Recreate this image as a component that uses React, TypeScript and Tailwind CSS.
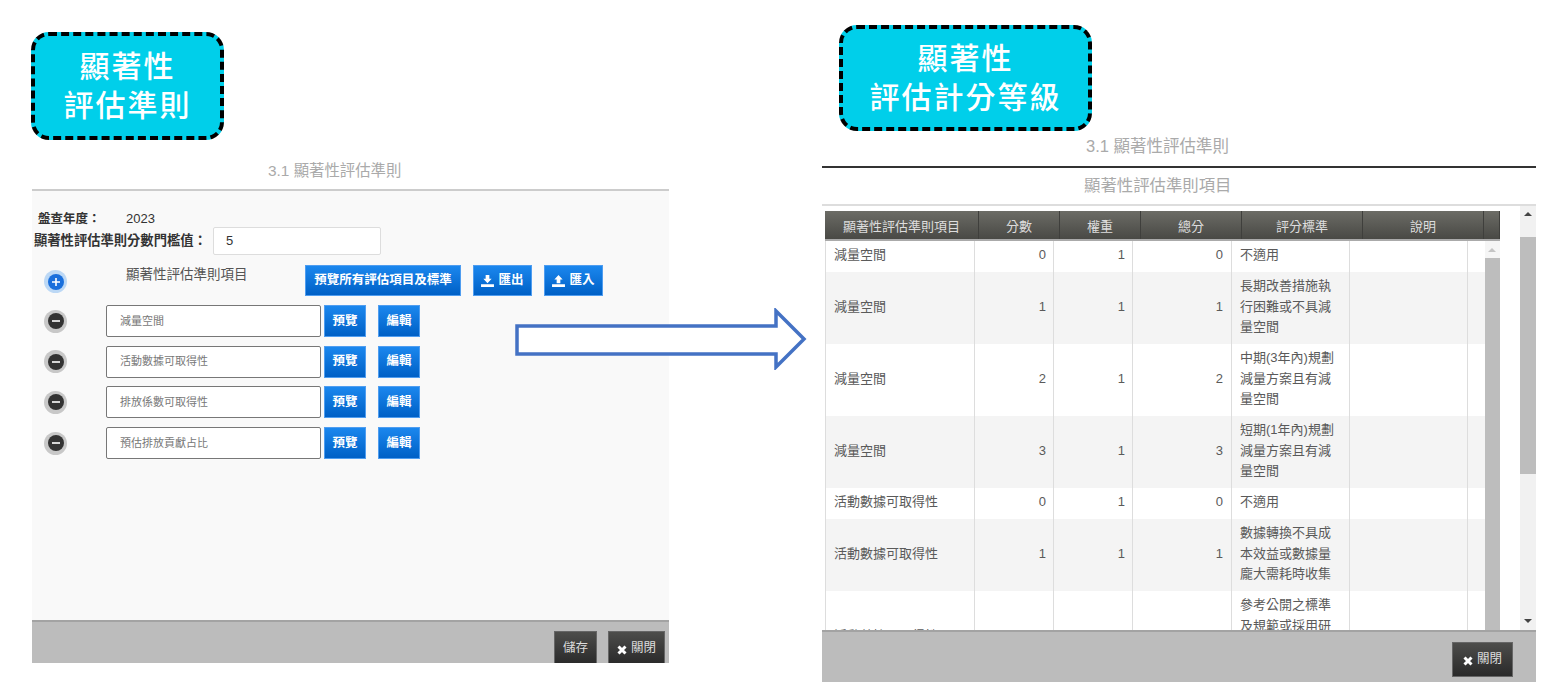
const font = "font-['Liberation_Sans','Noto_Sans_CJK_TC',sans-serif]";

const criteria = ["減量空間", "活動數據可取得性", "排放係數可取得性", "預估排放貢獻占比"];

const headers = [
  { label: "顯著性評估準則項目", width: "w-[154px]" },
  { label: "分數", width: "w-[81px]" },
  { label: "權重", width: "w-[81px]" },
  { label: "總分", width: "w-[101px]" },
  { label: "評分標準", width: "w-[121px]" },
  { label: "說明", width: "w-[121px]" },
  { label: "", width: "w-[16px]" },
];

const rows = [
  { item: "減量空間", score: 0, total: 0, rule: "不適用", height: "h-[31px]" },
  { item: "減量空間", score: 1, total: 1, rule: "長期改善措施執\n行困難或不具減\n量空間", height: "h-[72px]" },
  { item: "減量空間", score: 2, total: 2, rule: "中期(3年內)規劃\n減量方案且有減\n量空間", height: "h-[72px]" },
  { item: "減量空間", score: 3, total: 3, rule: "短期(1年內)規劃\n減量方案且有減\n量空間", height: "h-[72px]" },
  { item: "活動數據可取得性", score: 0, total: 0, rule: "不適用", height: "h-[31px]" },
  { item: "活動數據可取得性", score: 1, total: 1, rule: "數據轉換不具成\n本效益或數據量\n龐大需耗時收集", height: "h-[72px]" },
  { item: "活動數據可取得性", score: 2, total: 2, rule: "參考公開之標準\n及規範或採用研\n究報告數據推\n估", height: "h-[93px]" },
];

function Badge({ lines, className }: { lines: string[]; className: string }) {
  return (
    <div
      className={`flex flex-col items-center justify-center rounded-[18px] border-[4px] border-dashed border-black bg-[#00cfea] text-[30px] leading-[39px] font-medium tracking-[2px] text-white ${className}`}
    >
      {lines.map((line) => (
        <div key={line}>{line}</div>
      ))}
    </div>
  );
}

function BlueButton({ children, className }: { children: React.ReactNode; className: string }) {
  return (
    <button className={`flex items-center justify-center gap-1 border border-[#4f9df0] bg-gradient-to-b from-[#1b87ee] to-[#0060c6] text-[12.5px] font-bold text-white ${className}`}>
      {children}
    </button>
  );
}

function DarkButton({ children, className }: { children: React.ReactNode; className: string }) {
  return (
    <button className={`flex shrink-0 items-center justify-center gap-1 border border-[#666] bg-gradient-to-b from-[#4d4d4b] to-[#2a2a2a] text-[12.5px] text-[#ddd] ${className}`}>
      {children}
    </button>
  );
}

function CloseIcon() {
  return (
    <svg width="10" height="10" viewBox="0 0 10 10" className="mt-[3px]">
      <path d="M1.5 1.5 8.5 8.5M8.5 1.5 1.5 8.5" stroke="#fff" strokeWidth="3" />
    </svg>
  );
}

function TransferIcon({ up }: { up?: boolean }) {
  return (
    <svg width="13" height="12" viewBox="0 0 14 13" fill="#fff">
      {up ? <path d="M7 0 11.5 5H9v4H5V5H2.5z" /> : <path d="M5 0h4v4h2.5L7 9 2.5 4H5z" />}
      <path d="M0 10h14v3H0z" />
    </svg>
  );
}

function RoundIcon({ plus }: { plus?: boolean }) {
  return (
    <div className={`flex size-[23px] shrink-0 items-center justify-center rounded-full ${plus ? "bg-[#bcd8f5]" : "bg-[#c8c8c8]"}`}>
      <div className={`flex size-[16px] items-center justify-center rounded-full ${plus ? "bg-[#1a6fdc]" : "bg-[#333]"}`}>
        <svg width="8" height="8" viewBox="0 0 8 8">
          <path d={plus ? "M0 4h8M4 0v8" : "M0 4h8"} stroke="#fff" strokeWidth="1.6" />
        </svg>
      </div>
    </div>
  );
}

function LeftPanel() {
  return (
    <div className="ml-[32px] flex w-[637px] shrink-0 flex-col">
      <Badge lines={["顯著性", "評估準則"]} className="mt-[32px] -ml-[1px] h-[108px] w-[193px]" />
      <div className="h-[49px] pt-[23px] pl-[236px] text-[15.4px] leading-[16px] text-[#aaa]">3.1 顯著性評估準則</div>
      <div className="flex h-[431px] flex-col border-t-[2px] border-[#ccc] bg-[#f9f9f9]">
        <div className="mt-[20px] flex h-[16px] items-center pl-[6px] text-[#333]">
          <span className="w-[88px] text-[12.5px] font-bold">盤查年度：</span>
          <span className="text-[13px]">2023</span>
        </div>
        <div className="flex items-center pl-[2px]">
          <span className="w-[179px] text-[13.3px] font-bold whitespace-nowrap text-[#333]">顯著性評估準則分數門檻值：</span>
          <div className="flex h-[28px] w-[168px] items-center rounded-[2px] border border-[#ddd] bg-white pl-[12px] text-[13px] text-[#333]">5</div>
        </div>
        <div className="mt-[10px] flex items-start pl-[12px]">
          <div className="mt-[5px]"><RoundIcon plus /></div>
          <span className="ml-[59px] w-[179px] text-[13.5px] text-[#555]">顯著性評估準則項目</span>
          <BlueButton className="h-[31px] w-[156px]">預覽所有評估項目及標準</BlueButton>
          <BlueButton className="ml-[12px] h-[31px] w-[59px]"><TransferIcon /><span>匯出</span></BlueButton>
          <BlueButton className="ml-[12px] h-[31px] w-[59px]"><TransferIcon up /><span>匯入</span></BlueButton>
        </div>
        <div className="mt-[9px] flex flex-col gap-[8.7px] pl-[12px]">
          {criteria.map((name) => (
            <div key={name} className="flex h-[32px] items-center">
              <RoundIcon />
              <div className="ml-[39px] flex h-full w-[215px] items-center rounded-[2px] border border-[#777] bg-white pl-[13px] text-[11px] text-[#777]">{name}</div>
              <BlueButton className="ml-[3px] h-full w-[42px]">預覽</BlueButton>
              <BlueButton className="ml-[12px] h-full w-[42px]">編輯</BlueButton>
            </div>
          ))}
        </div>
      </div>
      <div className="flex h-[43px] justify-end gap-[11px] overflow-hidden border-t-[2px] border-[#a3a3a3] bg-[#bcbcbc] pt-[9px] pr-[4px]">
        <DarkButton className="h-[34px] w-[43px]">儲存</DarkButton>
        <DarkButton className="h-[34px] w-[57px]"><CloseIcon /><span>關閉</span></DarkButton>
      </div>
    </div>
  );
}

function RightPanel() {
  return (
    <div className="ml-[153px] flex w-[714px] shrink-0 flex-col">
      <Badge lines={["顯著性", "評估計分等級"]} className="mt-[25px] ml-[17px] h-[106px] w-[253px]" />
      <div className="h-[35px] pt-[7px] pl-[264px] text-[16.5px] leading-[17px] text-[#aaa]">3.1 顯著性評估準則</div>
      <div className="h-[40px] border-y-[2px] border-t-[#333] border-b-[#ddd] pt-[8px] pl-[262px] text-[16.4px] leading-[18px] text-[#aaa]">顯著性評估準則項目</div>
      <div className="flex h-[424px] overflow-hidden">
        <div className="ml-[3px] w-[675px] pt-[5px]">
          <div className="flex h-[30px] border-b-[2px] border-[#aaa] bg-gradient-to-b from-[#6c6c66] to-[#494945]">
            {headers.map((h, i) => (
              <div
                key={i}
                className={`${h.width} flex shrink-0 items-center justify-center border-r border-[#3f3f3c] pt-[3px] text-[13px] text-[#ddd]`}
              >
                {h.label}
              </div>
            ))}
          </div>
          <div className="flex">
            <table className="w-[659px] table-fixed border-collapse border-l border-[#ddd] text-[13px] leading-[20.7px] text-[#5a5a5a]">
              <colgroup>
                <col className="w-[149px]" />
                <col className="w-[79px]" />
                <col className="w-[79px]" />
                <col className="w-[99px]" />
                <col className="w-[118px]" />
                <col className="w-[118px]" />
                <col className="w-[17px]" />
              </colgroup>
              <tbody>
                {rows.map((row, i) => (
                  <tr key={i} className={`${row.height} ${i % 2 === 1 ? "bg-[#f4f4f4]" : "bg-white"}`}>
                    <td className="border-r border-[#ddd] pb-[2px] pl-[8px]">{row.item}</td>
                    <td className="border-r border-[#ddd] pr-[7px] pb-[2px] text-right">{row.score}</td>
                    <td className="border-r border-[#ddd] pr-[7px] pb-[2px] text-right">1</td>
                    <td className="border-r border-[#ddd] pr-[8px] pb-[2px] text-right">{row.total}</td>
                    <td className="border-r border-[#ddd] pb-[2px] pl-[8px] whitespace-pre-line">{row.rule}</td>
                    <td className="border-r border-[#ddd]"></td>
                    <td></td>
                  </tr>
                ))}
              </tbody>
            </table>
            <div className="flex h-[389px] w-[16px] flex-col bg-[#f5f5f5]">
              <div className="flex h-[17px] items-center justify-center">
                <div className="size-0 border-x-[4px] border-b-[4px] border-x-transparent border-b-[#c4c4c4]" />
              </div>
              <div className="flex-1 bg-[#bdbdbd]" />
            </div>
          </div>
        </div>
        <div className="ml-[20px] flex h-full w-[16px] flex-col bg-[#f1f1f1]">
          <div className="flex h-[31px] items-center justify-center pb-[15px]">
            <div className="size-0 border-x-[4px] border-b-[4px] border-x-transparent border-b-[#444]" />
          </div>
          <div className="h-[237px] bg-[#bdbdbd]" />
          <div className="flex flex-1 items-end justify-center pb-[7px]">
            <div className="size-0 border-x-[4px] border-t-[4px] border-x-transparent border-t-[#444]" />
          </div>
        </div>
      </div>
      <div className="flex h-[52px] justify-end border-t-[2px] border-[#a3a3a3] bg-[#bcbcbc] pt-[10px] pr-[23px]">
        <DarkButton className="h-[35px] w-[61px]"><CloseIcon /><span>關閉</span></DarkButton>
      </div>
    </div>
  );
}

export default function App() {
  return (
    <div className={`relative flex h-[692px] w-[1553px] items-start overflow-hidden bg-white ${font}`}>
      <LeftPanel />
      <RightPanel />
      {/* arrow sits over the left panel */}
      <svg className="absolute top-[308px] left-[514px]" width="294" height="62" viewBox="0 0 294 62">
        <path d="M3 18H262V3L290 31 262 59V46H3z" fill="#fff" stroke="#4472c4" strokeWidth="3.5" />
      </svg>
    </div>
  );
}
